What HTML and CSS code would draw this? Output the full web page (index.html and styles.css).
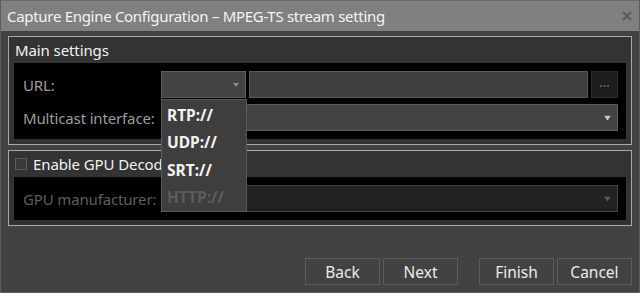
FILE: index.html
```html
<!DOCTYPE html>
<html>
<head>
<meta charset="utf-8">
<link rel="stylesheet" href="styles.css">
</head>
<body>
<div class="window">
  <div class="titlebar">
    <span class="title">Capture Engine Configuration – MPEG-TS stream setting</span>
    <svg class="close" width="10" height="10" viewBox="0 0 10 10"><path d="M1 1L9 9M9 1L1 9" stroke="#5a5a5a" stroke-width="2"/></svg>
  </div>
  <div class="content">
    <div class="group">
      <div class="group-head">Main settings</div>
      <div class="panel">
        <div class="row">
          <span class="label">URL:</span>
          <div class="combo combo-small"><svg class="arrow" width="6" height="4" viewBox="0 0 6 4"><path d="M0 0H6L3 4Z" fill="#8c8c8c"/></svg></div>
          <div class="field"></div>
          <div class="browse"><svg width="9" height="2" viewBox="0 0 9 2"><rect x="0" y="0" width="2" height="2" fill="#5a5a5a"/><rect x="3.5" y="0" width="2" height="2" fill="#5a5a5a"/><rect x="7" y="0" width="2" height="2" fill="#5a5a5a"/></svg></div>
        </div>
        <div class="row">
          <span class="label">Multicast interface:</span>
          <div class="combo combo-wide"><svg class="arrow" width="7" height="5" viewBox="0 0 7 5"><path d="M0 0H7L3.5 5Z" fill="#c8c8c8"/></svg></div>
        </div>
      </div>
    </div>
    <div class="group">
      <div class="group-head"><span class="check"></span>Enable GPU Decoding</div>
      <div class="panel">
        <div class="row">
          <span class="label disabled">GPU manufacturer:</span>
          <div class="combo combo-wide combo-disabled"><svg class="arrow" width="7" height="5" viewBox="0 0 7 5"><path d="M0 0H7L3.5 5Z" fill="#5e5e5e"/></svg></div>
        </div>
      </div>
    </div>
    <div class="buttons">
      <div class="btn-pair">
        <div class="btn">Back</div>
        <div class="btn">Next</div>
      </div>
      <div class="btn-pair">
        <div class="btn">Finish</div>
        <div class="btn">Cancel</div>
      </div>
    </div>
  </div>
  <div class="popup">
    <div class="item">RTP://</div>
    <div class="item">UDP://</div>
    <div class="item">SRT://</div>
    <div class="item item-disabled">HTTP://</div>
  </div>
</div>
</body>
</html>
```

FILE: styles.css
```css
* { box-sizing: border-box; }
html, body { margin: 0; padding: 0; }
body {
  width: 640px;
  height: 293px;
  overflow: hidden;
  background: #424242;
  font-family: "Noto Sans", sans-serif;
  font-size: 15px;
}
.window {
  position: relative;
  width: 640px;
  height: 293px;
  border: 1px solid #5c5c5c;
  border-top-color: #6a6a6a;
  background: #424242;
  display: flex;
  flex-direction: column;
}
.titlebar {
  height: 30px;
  flex: none;
  background: #808080;
  display: flex;
  align-items: center;
  justify-content: space-between;
  padding: 0 7px 0 6px;
}
.title {
  color: #f4f4f4;
  font-size: 15px;
  letter-spacing: -0.3px;
  white-space: nowrap;
}
.close { display: block; }
.content {
  padding: 5px 7px 0 7px;
  display: flex;
  flex-direction: column;
  gap: 5px;
}
.group {
  border: 1px solid #a9a9a9;
  background: #333333;
  padding: 0 5px 5px 5px;
}
.group-head {
  height: 26px;
  display: flex;
  align-items: center;
  padding-left: 1px;
  color: #f2f2f2;
  font-size: 15px;
  letter-spacing: -0.1px;
}
.check {
  width: 12px;
  height: 12px;
  border: 1px solid #5e5e5e;
  background: #3a3a3a;
  margin-right: 6px;
  flex: none;
}
.panel {
  background: #000;
  padding: 8px 8px 8px 9px;
  display: flex;
  flex-direction: column;
  gap: 6px;
}
.row {
  height: 27px;
  display: flex;
  align-items: stretch;
}
.label {
  width: 138px;
  flex: none;
  color: #9d9d9d;
  display: flex;
  align-items: center;
  white-space: nowrap;
  letter-spacing: -0.15px;
}
.label.disabled { color: #5f5f5f; }
.combo {
  position: relative;
  background: #434343;
  border: 1px solid #5e5e5e;
}
.combo-small { width: 85px; flex: none; }
.combo-wide { flex: 1; }
.combo-disabled { background: #222222; border-color: #444444; }
.arrow {
  position: absolute;
  right: 6px;
  top: 50%;
  transform: translateY(-50%);
}
.field {
  flex: 1;
  margin-left: 3px;
  background: #404040;
  border: 1px solid #5a5a5a;
}
.browse {
  width: 27px;
  flex: none;
  margin-left: 3px;
  background: #1d1d1d;
  border: 1px solid #2c2c2c;
  display: flex;
  align-items: center;
  justify-content: center;
  padding-top: 3px;
}
.browse svg { display: block; }
.buttons {
  margin-top: 27px;
  display: flex;
  justify-content: flex-end;
  gap: 21px;
}
.btn-pair { display: flex; gap: 3px; }
.btn {
  width: 75px;
  height: 27px;
  border: 1px solid #5c5c5c;
  background: #424242;
  color: #ececec;
  font-size: 15.5px;
  display: flex;
  align-items: center;
  justify-content: center;
}
.popup {
  position: absolute;
  left: 160px;
  top: 98px;
  width: 86px;
  height: 113px;
  background: #3e3e3e;
  border: 1px solid #5a5a5a;
  padding: 2px 0 0 5px;
}
.item {
  height: 27.3px;
  line-height: 27px;
  color: #f4f4f4;
  font-weight: bold;
  font-size: 15.5px;
}
.item-disabled { color: #5c5c5c; }
```
